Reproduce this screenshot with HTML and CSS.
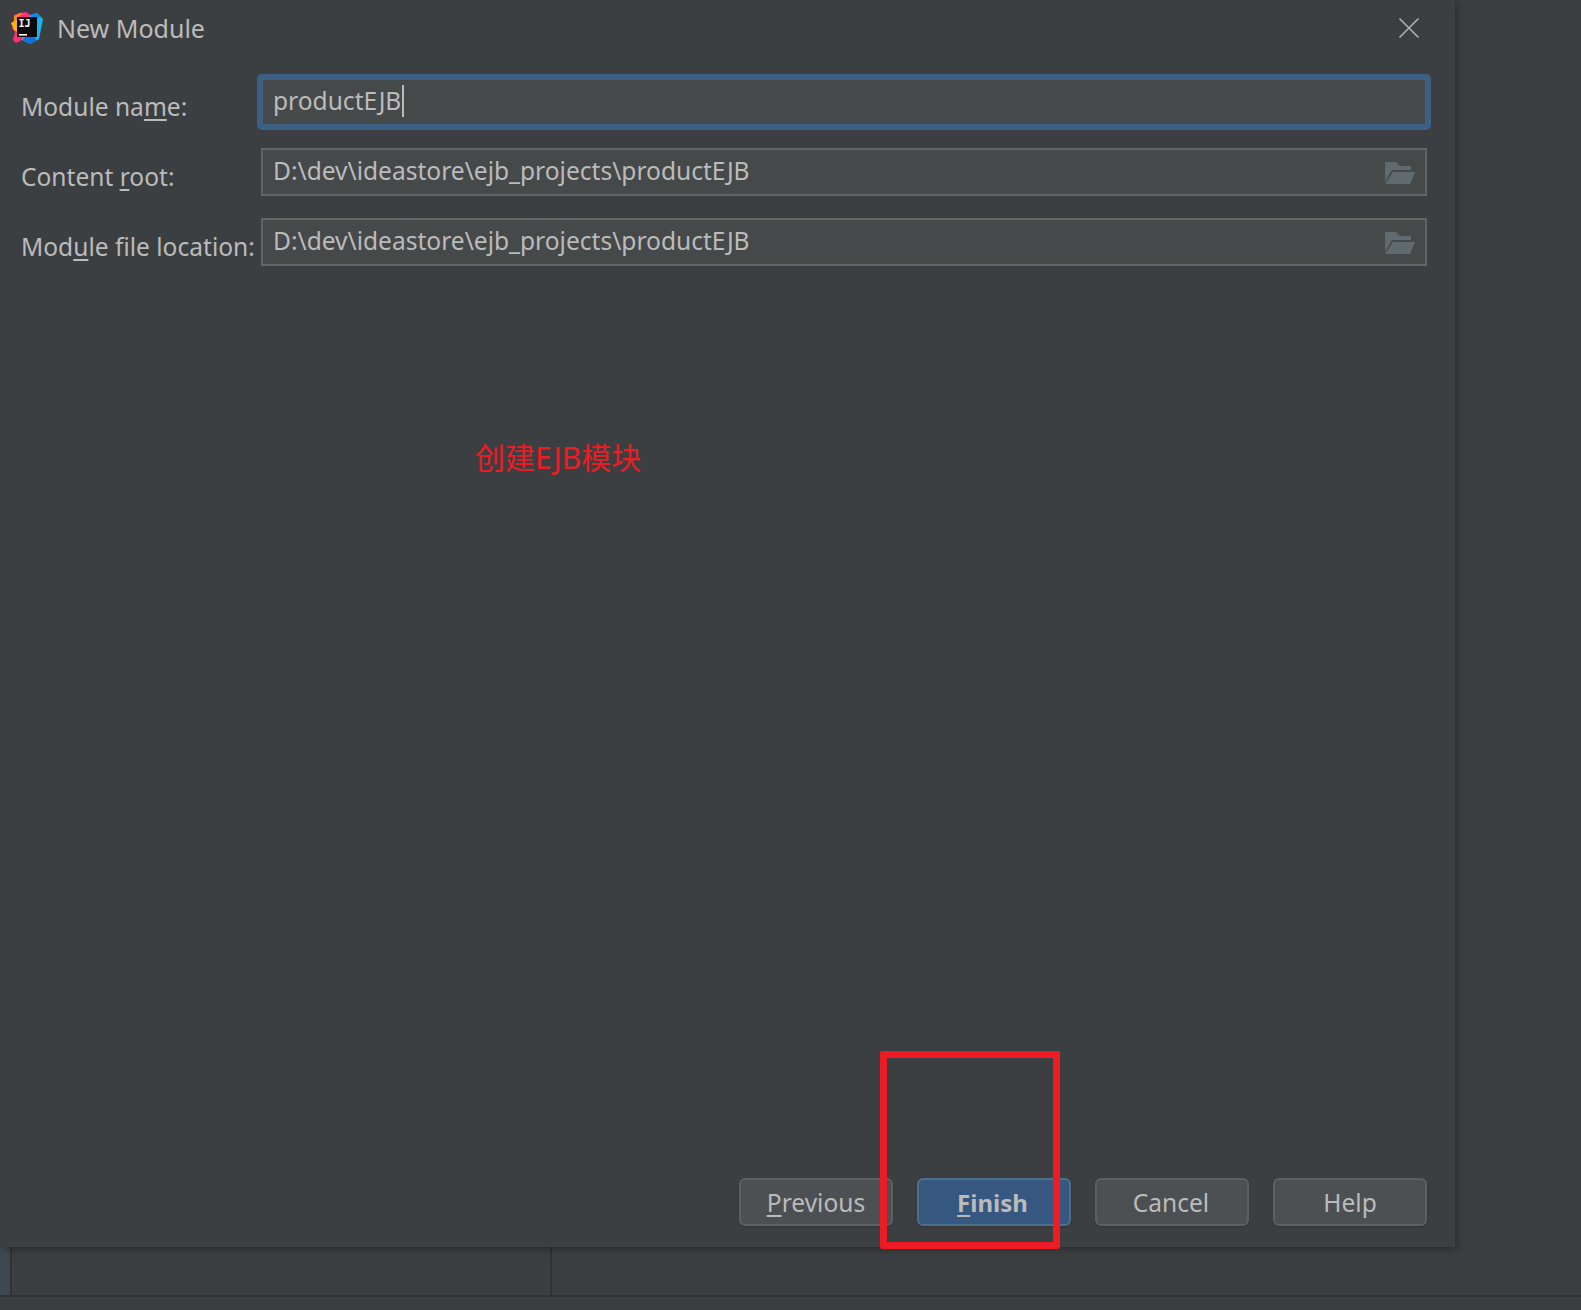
FILE: index.html
```html
<!DOCTYPE html>
<html lang="en">
<head>
<meta charset="utf-8">
<title>New Module</title>
<link rel="stylesheet" href="styles.css">
</head>
<body>
<div class="screen">
  <section class="dialog">
    <header class="titlebar">
      <svg class="logo" width="32" height="32" viewBox="0 0 32 32">
        <polygon points="3,3 9,1 15,0 21,4 15,26 5,31 2,28 4,20 1,16 4,10" fill="#fe2d78"/>
        <polygon points="3,4 9,1 12,1 6,6 3,10" fill="#fc8a1a"/>
        <polygon points="0,11 6,7 6,20 3,18" fill="#fbb016"/>
        <polygon points="19,3 26,1 32,7 28,27 19,32 11,28 14,22" fill="#16b4f2"/>
        <polygon points="19,3 26,1 29,5 24,8" fill="#0b8ae8"/>
        <polygon points="12,28 19,32 25,29 24,25 14,25" fill="#0b72e0"/>
        <rect x="6" y="5" width="20" height="20" fill="#0c0a0c"/>
        <rect x="8" y="22" width="8" height="1.6" fill="#fff"/>
        <text x="7.5" y="15" class="logo-text">IJ</text>
      </svg>
      <h1 class="title">New Module</h1>
      <svg class="close" width="22" height="22" viewBox="0 0 22 22">
        <path d="M1.5 1.5 L20.5 20.5 M20.5 1.5 L1.5 20.5" stroke="#afb1b3" stroke-width="1.6" fill="none"/>
      </svg>
    </header>

    <div class="form">
      <div class="row">
        <label class="label">Module na<u>m</u>e:</label>
        <div class="field field-focus"><span class="value">productEJB</span><span class="caret"></span></div>
      </div>
      <div class="row">
        <label class="label">Content <u>r</u>oot:</label>
        <div class="field"><span class="value">D:\dev\ideastore\ejb_projects\productEJB</span>
          <svg class="folder" width="30" height="22" viewBox="0 0 30 22"><path d="M0 0 H11 L15 4 H26 V8 H7 L0 20 Z M8 10 H30 L25 22 H0 Z" fill="#616a6e"/></svg>
        </div>
      </div>
      <div class="row">
        <label class="label">Mod<u>u</u>le file location:</label>
        <div class="field"><span class="value">D:\dev\ideastore\ejb_projects\productEJB</span>
          <svg class="folder" width="30" height="22" viewBox="0 0 30 22"><path d="M0 0 H11 L15 4 H26 V8 H7 L0 20 Z M8 10 H30 L25 22 H0 Z" fill="#616a6e"/></svg>
        </div>
      </div>
    </div>

    <footer class="buttons">
      <button class="btn"><u>P</u>revious</button>
      <button class="btn btn-primary"><u>F</u>inish</button>
      <button class="btn btn-cancel">Cancel</button>
      <button class="btn">Help</button>
    </footer>
  </section>

  <div class="below">
    <div class="below-left"></div>
    <div class="below-mid"></div>
    <div class="below-right"></div>
  </div>
  <div class="statusbar"></div>

  <div class="note">创建EJB模块</div>
  <div class="redbox"></div>
</div>
</body>
</html>
```

FILE: styles.css
```css
html, body {
  margin: 0;
  padding: 0;
  background: #3c3f41;
}
.screen {
  position: relative;
  width: 1581px;
  height: 1310px;
  overflow: hidden;
  display: flex;
  flex-direction: column;
  font-family: "Noto Sans", "Open Sans", "Noto Sans CJK SC", sans-serif;
  color: #bbbbbb;
  font-size: 24.55px;
}
.dialog {
  position: relative;
  z-index: 1;
  width: 1455px;
  height: 1247px;
  flex: none;
  display: flex;
  flex-direction: column;
  box-sizing: border-box;
  background: #3c3f41;
  box-shadow: 2px 2px 8px rgba(0, 0, 0, 0.35);
}
.titlebar {
  height: 58px;
  flex: none;
  display: flex;
  align-items: center;
  padding: 0 35px 2px 11px;
  box-sizing: border-box;
}
.logo { flex: none; margin-right: 14px; }
.logo-text {
  font-family: "DejaVu Sans Mono", monospace;
  font-weight: 700;
  font-size: 10px;
  fill: #fff;
}
.title {
  margin: 0;
  font-size: 25px;
  font-weight: 400;
  flex: 1;
}
.close { flex: none; }
.form {
  display: flex;
  flex-direction: column;
  gap: 22px;
  padding: 20px 28px 0 21px;
}
.row {
  display: flex;
  height: 48px;
}
.label {
  width: 240px;
  flex: none;
  white-space: nowrap;
  line-height: 58px;
}
.label u, .btn u { text-underline-offset: 3px; text-decoration-thickness: 2px; }
.field {
  flex: 1;
  display: flex;
  align-items: center;
  box-sizing: border-box;
  padding: 0 10px;
  background: #45494a;
  border: 2px solid #646464;
  line-height: 40px;
}
.field-focus {
  border-color: #3d6185;
  outline: 4px solid #3d6185;
  border-radius: 1px;
}
.value { white-space: nowrap; margin-top: -2px; }
.caret {
  width: 2px;
  height: 32px;
  margin-left: 1px;
  margin-top: -3px;
  background: #bbbbbb;
}
.folder { margin-left: auto; margin-top: 2px; }
.buttons {
  margin-top: auto;
  display: flex;
  justify-content: flex-end;
  gap: 24px;
  padding: 0 28px 21px 0;
}
.btn {
  width: 154px;
  height: 48px;
  box-sizing: border-box;
  border: 2px solid #5e6060;
  border-radius: 6px;
  background: #4c5052;
  color: #bbbbbb;
  font: inherit;
  padding: 0;
  box-shadow: 0 1px 2px rgba(0, 0, 0, 0.2);
}
.btn-primary {
  background: #365880;
  border-color: #4c708c;
  font-weight: 700;
  font-size: 24px;
  padding-right: 3px;
}
.btn-cancel { padding-right: 2px; }
.below {
  height: 48px;
  flex: none;
  display: flex;
}
.below-left {
  width: 10px;
  background: #414750;
  border-right: 2px solid #323232;
}
.below-mid {
  width: 538px;
  border-right: 2px solid #323232;
}
.below-right { flex: 1; }
.statusbar {
  flex: 1;
  border-top: 2px solid #323232;
}
.note {
  position: absolute;
  z-index: 2;
  left: 475px;
  top: 436px;
  font-size: 30px;
  line-height: 44px;
  white-space: nowrap;
  color: #ed1c24;
  font-family: "Noto Sans", "Noto Sans CJK SC", sans-serif;
}
.redbox {
  position: absolute;
  z-index: 2;
  left: 880px;
  top: 1051px;
  width: 180px;
  height: 198px;
  box-sizing: border-box;
  border: 7px solid #ed1c24;
  border-radius: 2px;
}
```
